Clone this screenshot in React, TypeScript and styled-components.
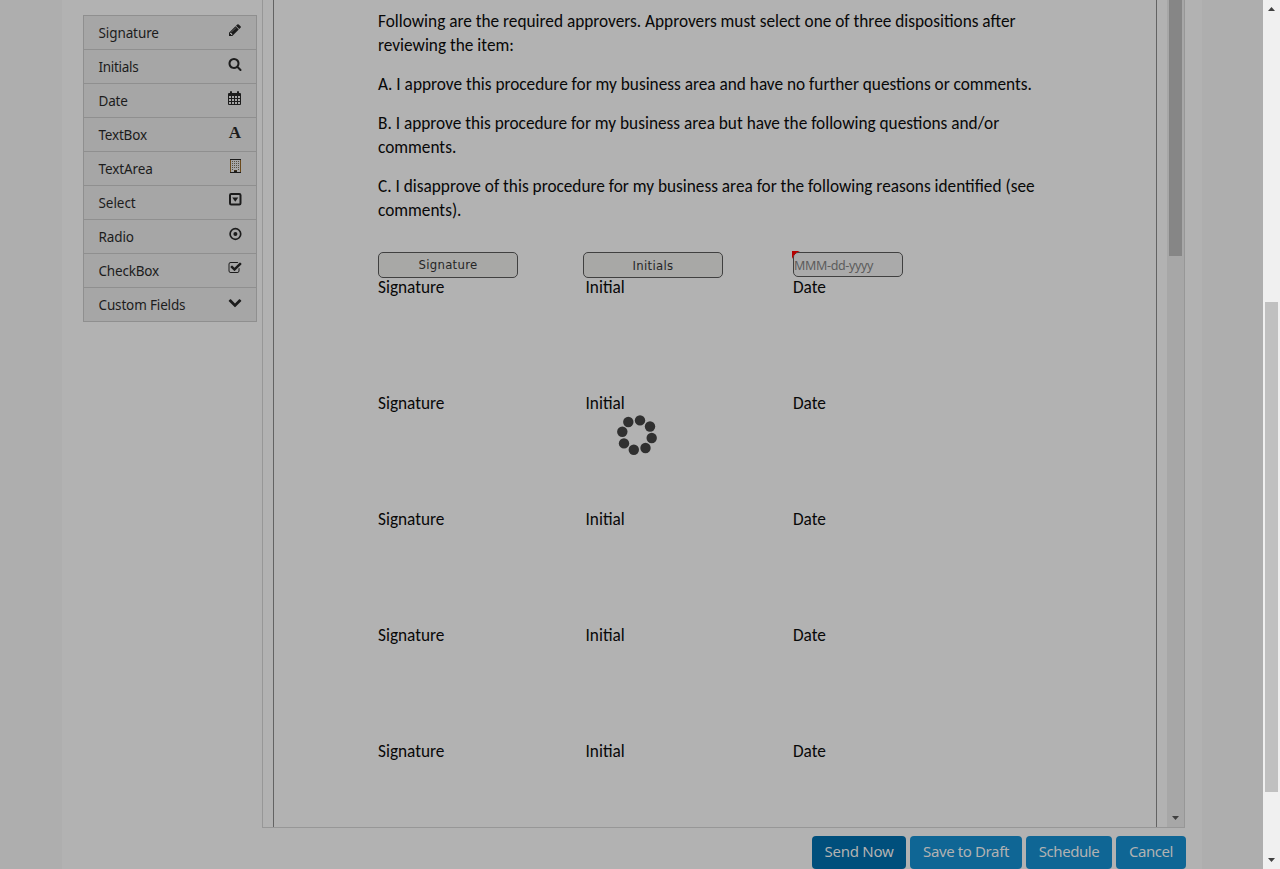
import React from "react";
import styled, { createGlobalStyle } from "styled-components";

const GlobalStyle = createGlobalStyle`
  * { box-sizing: border-box; }
  html, body { margin: 0; padding: 0; overflow: hidden; background: #aeaeae; }
  body { font-family: "Noto Sans", sans-serif; }
`;

const Screen = styled.div`
  display: flex;
  width: 1280px;
  height: 869px;
  overflow: hidden;
  background: #aeaeae;
`;

const Viewport = styled.div`
  position: relative;
  flex: 1;
  display: flex;
  padding: 0 61px 0 62px;
`;

const Container = styled.main`
  flex: 1;
  display: grid;
  grid-template-columns: 174px 923px;
  column-gap: 5px;
  padding-left: 21px;
  background: #b2b2b2;
`;

const Sidebar = styled.nav`
  height: 307px;
  margin-top: 15px;
  border: 1px solid #8f8f8f;
  background: #a6a6a6;
`;

const FieldItem = styled.div`
  display: flex;
  align-items: center;
  justify-content: space-between;
  height: 34px;
  padding: 0 14px 0 14.500px;
  border-bottom: 1px solid #8f8f8f;
  color: #1c1c1c;
  font-size: 13.500px;
  line-height: 20px;
  &:last-child { height: 33px; border-bottom: 0; }
`;

const FieldName = styled.span<{ $spacing: number }>`
  padding-top: 1px;
  letter-spacing: ${(p) => p.$spacing}px;
`;

const Icon = styled.svg`
  width: 14px;
  height: 14px;
  margin-top: -5px;
  fill: #1c1c1c;
  overflow: visible;
`;

const LetterIcon = styled.span`
  width: 14px;
  margin-top: -3px;
  font: bold 17px/16px "Liberation Serif", serif;
  text-align: center;
`;

const Workspace = styled.section`
  display: flex;
  flex-direction: column;
`;

const Editor = styled.div`
  display: flex;
  height: 828px;
  padding-left: 10px;
  border: 1px solid #979797;
  border-top: 0;
`;

const Paper = styled.article`
  width: 884px;
  padding: 10px 104px 0;
  border: solid #636363;
  border-width: 0 1px;
  color: #080808;
  font-family: Carlito, Lato, sans-serif;
  font-size: 17.280px;
  line-height: 24px;
`;

const Paragraph = styled.p`
  margin: 0 0 15px;
`;

const Line = styled.span`
  display: block;
  white-space: nowrap;
`;

const FieldRow = styled.div`
  display: grid;
  grid-template-columns: 205px 210px 110px;
  align-items: start;
  height: 24px;
  margin-top: 29px;
`;

const SignField = styled.div<{ $drop?: number }>`
  width: 140px;
  height: 26px;
  padding-top: ${(p) => p.$drop ?? 0}px;
  border: 1px solid #404040;
  border-radius: 5px;
  background: #a8a8a6;
  color: #262626;
  font: 13px/24px "DejaVu Sans Condensed", "DejaVu Sans", sans-serif;
  letter-spacing: 0.300px;
  text-align: center;
`;

const DateField = styled.div`
  position: relative;
  width: 110px;
  height: 25px;
  border: 1px solid #404040;
  border-radius: 5px;
  background: #aaaaaa;
  color: #5c5c5c;
  font: 12.500px/25px "Noto Sans", sans-serif;
  letter-spacing: -0.350px;
`;

const RequiredMark = styled.i`
  position: absolute;
  top: -2px;
  left: -2px;
  width: 8px;
  height: 8px;
  background: #b60000;
  clip-path: polygon(0 0, 100% 0, 60% 20%, 22% 55%, 0 100%);
`;

const LabelRow = styled.div`
  display: grid;
  grid-template-columns: 207.5px 207.5px 110px;
  height: 24px;
  margin-bottom: 91.9px;
`;

const ScrollTrack = styled.div<{ $inner?: boolean }>`
  display: flex;
  flex-direction: column;
  align-items: center;
  justify-content: space-between;
  width: 17px;
  height: 100%;
  margin-left: ${(p) => (p.$inner ? 10 : 0)}px;
  padding: ${(p) => (p.$inner ? "0 0 7px" : "7px 0")};
  background: ${(p) => (p.$inner ? "#a7a7a7" : "#f0f0f0")};
`;

const ScrollThumb = styled.div<{ $inner?: boolean }>`
  width: 13px;
  height: ${(p) => (p.$inner ? 256 : 490)}px;
  margin-top: ${(p) => (p.$inner ? 0 : 291)}px;
  margin-bottom: auto;
  background: ${(p) => (p.$inner ? "#868686" : "#c0c0c0")};
`;

const Arrow = styled.svg`
  width: 7px;
  height: 4px;
  fill: #404040;
`;

const Actions = styled.footer`
  display: flex;
  gap: 4px;
  margin: 8px -1px 0 550px;
`;

const ActionButton = styled.button<{ $primary?: boolean; $width: number; $spacing: number }>`
  width: ${(p) => p.$width}px;
  height: 33px;
  padding: 0 0 3px;
  border: 0;
  border-radius: 4px;
  background: ${(p) => (p.$primary ? "#004f7c" : "#0f6695")};
  color: #b2b2b2;
  font: 15px/30px "Noto Sans", sans-serif;
  letter-spacing: ${(p) => p.$spacing}px;
  white-space: nowrap;
`;

const Spinner = styled.svg`
  position: absolute;
  left: 612px;
  top: 410px;
  width: 50px;
  height: 50px;
  fill: #303030;
`;

const fa = (d: string) => (
  <Icon viewBox="0 0 1792 1792"><path d={d} /></Icon>
);

const fields: { name: string; spacing: number; icon: React.ReactNode }[] = [
  { name: "Signature", spacing: -0.1, icon: fa("M491 1536l91-91-235-235-91 91v107h128v128h107zm523-928q0-22-22-22-10 0-17 7l-542 542q-7 7-7 17 0 22 22 22 10 0 17-7l542-542q7-7 7-17zm-54-192l416 416-832 832h-416v-416zm683 96q0 53-37 90l-166 166-416-416 166-165q36-38 90-38 53 0 91 38l235 234q37 39 37 91z") },
  { name: "Initials", spacing: -0.3, icon: fa("M1216 832q0-185-131.5-316.5t-316.5-131.5-316.5 131.5-131.5 316.5 131.5 316.5 316.5 131.5 316.5-131.5 131.5-316.5zm512 832q0 52-38 90t-90 38q-54 0-90-38l-343-342q-179 124-399 124-143 0-273.5-55.5t-225-150-150-225-55.5-273.5 55.5-273.5 150-225 225-150 273.5-55.5 273.5 55.5 225 150 150 225 55.5 273.5q0 220-124 399l343 343q37 37 37 90z") },
  { name: "Date", spacing: -0.2, icon: (
    <Icon viewBox="0 0 14 14">
      <path fillRule="evenodd" d="M1 2h1V1q0-1 1-1t1 1v1h5V1q0-1 1-1t1 1v1h1q1 0 1 1v10q0 1-1 1H1q-1 0-1-1V3q0-1 1-1zM1 5v2h2V5zM4 5v2h2V5zM7 5v2h2V5zM10 5v2h2V5zM1 8v2h2V8zM4 8v2h2V8zM7 8v2h2V8zM10 8v2h2V8zM1 11v2h2v-2zM4 11v2h2v-2zM7 11v2h2v-2zM10 11v2h2v-2z" />
    </Icon>) },
  { name: "TextBox", spacing: -0.2, icon: <LetterIcon>A</LetterIcon> },
  { name: "TextArea", spacing: -0.1, icon: (
    <Icon viewBox="0 0 14 14">
      <path fill="#6b4a1c" fillRule="evenodd" d="M2 0h11v14H2zM3 1v12h3v-2h3v2h3V1z" />
      <path fill="#57503f" d="M4 2h1v1H4zM6 2h1v1H6zM8 2h1v1H8zM10 2h1v1h-1zM4 4h1v1H4zM6 4h1v1H6zM8 4h1v1H8zM10 4h1v1h-1zM4 6h1v1H4zM6 6h1v1H6zM8 6h1v1H8zM10 6h1v1h-1zM4 8h1v1H4zM6 8h1v1H6zM8 8h1v1H8zM10 8h1v1h-1zM4 10h1v1H4zM10 10h1v1h-1z" />
      <path d="M6 11.500h3V13h4v1H2v-1h4zM2 0h11v1H2z" />
    </Icon>) },
  { name: "Select", spacing: -0.05, icon: (
    <Icon viewBox="0 0 14 14">
      <rect x="2" y="1" width="10.500" height="10.500" rx="1.200" fill="none" stroke="#1c1c1c" strokeWidth="2" />
      <path d="M4.250 4.500h6L7.250 8.700z" />
    </Icon>) },
  { name: "Radio", spacing: -0.1, icon: (
    <Icon viewBox="0 0 14 14">
      <circle cx="7.400" cy="7" r="5.300" fill="none" stroke="#1c1c1c" strokeWidth="1.700" />
      <circle cx="7.400" cy="7" r="2" />
    </Icon>) },
  { name: "CheckBox", spacing: -0.2, icon: fa("M1472 930v318q0 119-84.5 203.5t-203.5 84.5h-832q-119 0-203.5-84.5t-84.5-203.5v-832q0-119 84.5-203.5t203.5-84.5h832q63 0 117 25 15 7 18 23 3 17-9 29l-49 49q-10 10-23 10-3 0-9-2-23-6-45-6h-832q-66 0-113 47t-47 113v832q0 66 47 113t113 47h832q66 0 113-47t47-113v-254q0-13 9-22l64-64q10-10 23-10 6 0 12 3 20 8 20 29zm231-489l-814 814q-24 24-57 24t-57-24l-430-430q-24-24-24-57t24-57l110-110q24-24 57-24t57 24l263 263 647-647q24-24 57-24t57 24l110 110q24 24 24 57t-24 57z") },
  { name: "Custom Fields", spacing: -0.15, icon: fa("M1683 808l-742 741q-19 19-45 19t-45-19l-742-741q-19-19-19-45.5t19-45.5l166-165q19-19 45-19t45 19l531 531 531-531q19-19 45-19t45 19l166 165q19 19 19 45.5t-19 45.5z") },
];

const paragraphs: string[][] = [
  [
    "Following are the required approvers. Approvers must select one of three dispositions after",
    "reviewing the item:",
  ],
  ["A. I approve this procedure for my business area and have no further questions or comments."],
  [
    "B. I approve this procedure for my business area but have the following questions and/or",
    "comments.",
  ],
  [
    "C. I disapprove of this procedure for my business area for the following reasons identified (see",
    "comments).",
  ],
];

const dots = [
  [16.3, 12], [28, 10.4], [38, 16.5], [39.7, 28], [33.5, 38], [21.8, 39.8], [12, 33.4], [10.3, 21.8],
];

export default function App() {
  return (
    <Screen>
      <GlobalStyle />
      <Viewport>
        <Container>
          <Sidebar>
            {fields.map((f) => (
              <FieldItem key={f.name}>
                <FieldName $spacing={f.spacing}>{f.name}</FieldName>
                {f.icon}
              </FieldItem>
            ))}
          </Sidebar>
          <Workspace>
            <Editor>
              <Paper>
                {paragraphs.map((lines, i) => (
                  <Paragraph key={i}>
                    {lines.map((text) => (
                      <Line key={text}>{text}</Line>
                    ))}
                  </Paragraph>
                ))}
                <FieldRow>
                  <SignField>Signature</SignField>
                  <SignField $drop={1}>Initials</SignField>
                  <DateField><RequiredMark />MMM-dd-yyyy</DateField>
                </FieldRow>
                {[0, 1, 2, 3, 4].map((row) => (
                  <LabelRow key={row}>
                    <Line>Signature</Line>
                    <Line>Initial</Line>
                    <Line>Date</Line>
                  </LabelRow>
                ))}
              </Paper>
              <ScrollTrack $inner>
                <ScrollThumb $inner />
                <Arrow viewBox="0 0 7 4"><path d="M0 0h7L3.500 4z" /></Arrow>
              </ScrollTrack>
            </Editor>
            <Actions>
              <ActionButton $primary $width={94} $spacing={-0.25}>Send Now</ActionButton>
              <ActionButton $width={112} $spacing={-0.38}>Save to Draft</ActionButton>
              <ActionButton $width={86} $spacing={-0.45}>Schedule</ActionButton>
              <ActionButton $width={70} $spacing={-0.45}>Cancel</ActionButton>
            </Actions>
          </Workspace>
        </Container>
        <Spinner viewBox="0 0 50 50">
          {dots.map(([x, y]) => <circle key={`${x}-${y}`} cx={x} cy={y} r="5.200" />)}
        </Spinner>
      </Viewport>
      <ScrollTrack>
        <Arrow viewBox="0 0 7 4"><path d="M0 4h7L3.500 0z" /></Arrow>
        <ScrollThumb />
        <Arrow viewBox="0 0 7 4"><path d="M0 0h7L3.500 4z" /></Arrow>
      </ScrollTrack>
    </Screen>
  );
}
